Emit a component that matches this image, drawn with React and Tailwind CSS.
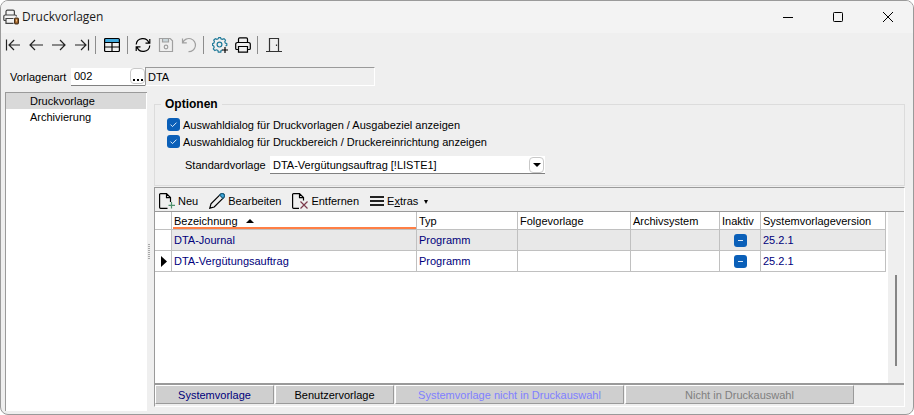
import { useEffect, useRef } from "react";

function Separator() {
  return <span className="h-[18px] w-px shrink-0 bg-[#8c8c8c]" />;
}

function ToolButton({ label, children, disabled, className = "" }) {
  return (
    <button
      type="button"
      aria-label={label}
      disabled={disabled}
      className={"flex h-5 w-[23px] shrink-0 items-center justify-center " + className}
    >
      {children}
    </button>
  );
}

function Icon({ size = "size-4", stroke = "stroke-[#222]", children }) {
  return (
    <svg viewBox="0 0 16 16" aria-hidden="true" className={"shrink-0 fill-none stroke-[1.2] " + size + " " + stroke}>
      {children}
    </svg>
  );
}

function CheckBox({ id, label, mixed }) {
  const ref = useRef(null);
  useEffect(() => {
    if (mixed) ref.current.indeterminate = true;
  }, [mixed]);
  return (
    <span className="inline-grid size-[13px] shrink-0">
      <input
        ref={ref}
        id={id}
        type="checkbox"
        aria-label={label}
        defaultChecked={!mixed}
        className="col-start-1 row-start-1 size-[13px] appearance-none rounded-[3px] bg-[#0a5fb8]"
      />
      <svg
        viewBox="0 0 13 13"
        aria-hidden="true"
        className="pointer-events-none col-start-1 row-start-1 size-[13px] fill-none stroke-[#dcebfa]"
      >
        <path d={mixed ? "M4 6.5h5" : "M3.5 6.6l2 2 4-4"} />
      </svg>
    </span>
  );
}

function TitleBar() {
  return (
    <header className="flex h-8 shrink-0 items-center bg-[#f3f3f3] pl-0.5">
      <svg viewBox="0 0 16 16" aria-hidden="true" className="size-4 fill-none stroke-[#444] stroke-[1.2]">
        <path d="M3 6V2.6A1.4 1.4 0 0 1 4.4 1.2H10A1.4 1.4 0 0 1 11.4 2.6V6" />
        <path d="M3 11.5H1.8A1 1 0 0 1 .8 10.5V7.5A1.5 1.5 0 0 1 2.3 6H12A1.5 1.5 0 0 1 13.5 7.5" />
        <path d="M10.5 14.4H3V9.5h7.5" />
        <rect x="11.6" y="9" width="3.8" height="5.8" rx="1" className="fill-[#a86a2c] stroke-[#4a3018]" />
        <path d="M13.5 10.5v2" className="stroke-[#f0c48c]" />
      </svg>
      <h1 className="grow pl-[3px] font-['Open_Sans',sans-serif] text-[12px] leading-4 text-[#1a1a1a]">Druckvorlagen</h1>
      <div className="flex">
        <button type="button" aria-label="Minimieren" className="flex h-8 w-[50px] items-center justify-center">
          <svg viewBox="0 0 10 10" className="size-2.5 fill-none stroke-black">
            <path d="M0 5.5h10" />
          </svg>
        </button>
        <button type="button" aria-label="Maximieren" className="flex h-8 w-[50px] items-center justify-center">
          <svg viewBox="0 0 10 10" className="size-2.5 fill-none stroke-black">
            <rect x=".5" y=".5" width="9" height="9" rx=".8" />
          </svg>
        </button>
        <button type="button" aria-label="Schließen" className="flex h-8 w-[50px] items-center justify-center">
          <svg viewBox="0 0 10 10" className="size-2.5 fill-none stroke-black">
            <path d="M0 0l10 10M10 0L0 10" />
          </svg>
        </button>
      </div>
    </header>
  );
}

function MainToolbar() {
  return (
    <div role="toolbar" aria-label="Hauptleiste" className="flex h-6 shrink-0 items-center">
      <ToolButton label="Erster">
        <Icon><path d="M1.5 2.5v11M15 8H4M9 3L4 8l5 5" /></Icon>
      </ToolButton>
      <ToolButton label="Zurück">
        <Icon><path d="M15 8H2M7 3L2 8l5 5" /></Icon>
      </ToolButton>
      <ToolButton label="Weiter">
        <Icon><path d="M1 8h13M9 3l5 5-5 5" /></Icon>
      </ToolButton>
      <ToolButton label="Letzter">
        <Icon><path d="M14.5 2.5v11M1 8h11M7 3l5 5-5 5" /></Icon>
      </ToolButton>
      <span className="w-0.5" />
      <Separator />
      <ToolButton label="Tabelle" className="mx-1">
        <Icon stroke="stroke-black">
          <path d="M1 2h14v3.5H1z" className="fill-[#3fa9dd] stroke-none" />
          <rect x=".6" y="1.5" width="14.8" height="13" rx="1" />
          <path d="M.6 5.5h14.8M.6 10h14.8M8 5.5v9" />
        </Icon>
      </ToolButton>
      <Separator />
      <ToolButton label="Aktualisieren" className="ml-[3px]">
        <Icon stroke="stroke-black">
          <path d="M1.2 7.5A6.6 6.6 0 0 1 14 6M14.8 8.5A6.6 6.6 0 0 1 2 10M14.8 2v4.2h-4.3M1.2 14V9.8h4.3" />
        </Icon>
      </ToolButton>
      <ToolButton label="Speichern" disabled>
        <Icon stroke="stroke-[#a0a0a0]">
          <path d="M4.5 1.5h6V5h-6z" className="fill-[#c9d6da]" />
          <path d="M1.5 1.5h10.7l2.3 2.3v10.7h-13z" />
          <circle cx="8" cy="10" r="1.8" />
        </Icon>
      </ToolButton>
      <ToolButton label="Rückgängig" disabled>
        <Icon stroke="stroke-[#a0a0a0]">
          <path d="M1.5 1.5v4.3h4.3M1.8 5.5A6.6 6.6 0 1 1 7.5 14.7" />
        </Icon>
      </ToolButton>
      <span className="w-[3px]" />
      <Separator />
      <ToolButton label="Einstellungen" className="ml-1">
        <Icon stroke="stroke-[#1f7a99]">
          <path
            d="M9.9 12.1L8.6 12.5 8.3 14.3H5.8L5.4 12.5 4 11.9 2.3 12.7.8 11 1.7 9.3 1.2 8 0 7.5V5.7L1.4 5.1 1.9 3.7 1.2 2.2 2.8.8 4.4 1.5 5.6 1 6.2-.2H8L8.6 1 9.9 1.5 11.5.8 13 2.3 12.3 3.9 12.8 5.2 14.3 5.8V7.5L13 8.1"
            transform="translate(.5 .9)"
          />
          <circle cx="7.5" cy="7.6" r="2.4" />
          <path d="M13 10v6M10 13h6" className="stroke-black" />
        </Icon>
      </ToolButton>
      <ToolButton label="Drucken">
        <Icon stroke="stroke-black">
          <path d="M3.5 5.5V2A1.2 1.2 0 0 1 4.7.8h6.600A1.2 1.2 0 0 1 12.5 2v3.5" />
          <path d="M3.5 12.5H1.7a1 1 0 0 1-1-1V7.2A1.7 1.7 0 0 1 2.4 5.5h11.2a1.7 1.7 0 0 1 1.7 1.7v4.3a1 1 0 0 1-1 1h-1.8" />
          <path d="M3.5 9.5h9v5.7h-9z" />
        </Icon>
      </ToolButton>
      <span className="w-[3px]" />
      <Separator />
      <ToolButton label="Beenden" className="ml-1">
        <Icon stroke="stroke-[#333]">
          <path d="M3.5 14.5v-13h9v13M0 14.5h16M10.5 7.5v1.5" />
        </Icon>
      </ToolButton>
    </div>
  );
}

function GridButton({ icon, children }) {
  return (
    <button type="button" className="flex items-center gap-[3px] whitespace-nowrap">
      {icon}
      <span>{children}</span>
    </button>
  );
}

function GridToolbar() {
  return (
    <div role="toolbar" aria-label="Vorlagen" className="flex h-[23px] shrink-0 items-center gap-[11px] pt-0.5 pl-1">
      <GridButton
        icon={
          <Icon stroke="stroke-black">
            <path d="M8.5 15.3H1.6a1 1 0 0 1-1-1V1.6a1 1 0 0 1 1-1H7.5L11.5 4.6V9M7.5.6v4h4" />
            <path d="M12.5 9v6.5M9.5 12.3h6.5" className="stroke-[#4d8f6c]" />
          </Icon>
        }
      >
        Neu
      </GridButton>
      <GridButton
        icon={
          <Icon stroke="stroke-black">
            <path d="M.8 15.2l1.2-4.4L11.4 1.4a2.24 2.24 0 0 1 3.2 3.2L5.2 14z" />
            <path d="M10.7 2.1l.9-.9a2.2 2.2 0 0 1 3.2 3.2l-.9.9z" className="fill-[#3fa9dd] stroke-[#1c5f80]" />
          </Icon>
        }
      >
        Bearbeiten
      </GridButton>
      <GridButton
        icon={
          <Icon stroke="stroke-black">
            <path d="M7 15.3H1.6a1 1 0 0 1-1-1V1.6a1 1 0 0 1 1-1H7.5L11.5 4.6V7.5M7.5.6v4h4" />
            <path d="M8.5 8.5l7 7M15.5 8.5l-7 7" className="stroke-[#7d3a4c]" />
          </Icon>
        }
      >
        Entfernen
      </GridButton>
      <GridButton
        icon={
          <svg viewBox="0 0 14 12" aria-hidden="true" className="h-3 w-3.5 stroke-[#222] stroke-2">
            <path d="M0 2h14M0 6h14M0 10h14" />
          </svg>
        }
      >
        E<span className="underline">x</span>tras
        <svg viewBox="0 0 4 4" aria-hidden="true" className="ml-1.5 inline size-1 fill-black">
          <path d="M0 0h4L2 4z" />
        </svg>
      </GridButton>
    </div>
  );
}

const rows = [
  { name: "DTA-Journal", type: "Programm", version: "25.2.1", shaded: true },
  { name: "DTA-Vergütungsauftrag", type: "Programm", version: "25.2.1", current: true },
];

const head = "border-r border-b border-[#c0c0c0] px-0.5 text-left font-normal";
const cell = "border-r border-b border-[#c0c0c0] px-0.5";

function TemplateTable() {
  return (
    <div className="flex min-h-0 grow border-t border-[#9a9a9a] bg-white">
      <div className="grow pr-0.5">
        <table className="w-full table-fixed border-separate border-spacing-0 whitespace-nowrap">
          <colgroup>
            <col className="w-[17px]" />
            <col />
            <col className="w-[101px]" />
            <col className="w-[113px]" />
            <col className="w-[89px]" />
            <col className="w-[41px]" />
            <col className="w-[125px]" />
          </colgroup>
          <thead>
            <tr className="h-[18px]">
              <th className={head} aria-label="Markierung" />
              <th className="border-r border-b border-[#c0c0c0] pl-px text-left font-normal">
                <div className="flex h-[17px] items-center gap-2 border-b-2 border-[#ff7f45] pt-0.5 pl-px">
                  Bezeichnung
                  <svg viewBox="0 0 8 4" aria-hidden="true" className="h-1 w-2 fill-black">
                    <path d="M4 0l4 4H0z" />
                  </svg>
                </div>
              </th>
              <th className={head}>Typ</th>
              <th className={head}>Folgevorlage</th>
              <th className={head}>Archivsystem</th>
              <th className={head}>Inaktiv</th>
              <th className={head}>Systemvorlageversion</th>
            </tr>
          </thead>
          <tbody className="text-[#00007b]">
            {rows.map((row) => (
              <tr key={row.name} className={row.shaded ? "h-[21px] bg-[#e8e8e8]" : "h-[21px]"}>
                <td className={cell + " bg-white"}>
                  {row.current && (
                    <svg viewBox="0 0 6 11" aria-label="Aktuell" className="ml-1 h-[11px] w-1.5 fill-black">
                      <path d="M0 0l6 5.5L0 11z" />
                    </svg>
                  )}
                </td>
                <td className={cell}>{row.name}</td>
                <td className={cell}>{row.type}</td>
                <td className={cell} />
                <td className={cell} />
                <td className={cell}>
                  <div className="flex justify-center">
                    <CheckBox mixed label={"Inaktiv: " + row.name} />
                  </div>
                </td>
                <td className={cell}>{row.version}</td>
              </tr>
            ))}
          </tbody>
        </table>
      </div>
      <div className="flex w-4 shrink-0 justify-center bg-[#efefef] pt-[63px] pb-[17px]">
        <span className="w-0.5 bg-[#858585]" />
      </div>
    </div>
  );
}

function LegendButton({ className, children }) {
  return (
    <button
      type="button"
      className={
        "mr-px h-[19px] border border-t-white border-r-[#9a9a9a] border-b-[#9a9a9a] border-l-white bg-[#cfcfcf] leading-4 " +
        className
      }
    >
      {children}
    </button>
  );
}

export default function App() {
  return (
    <div className="flex h-screen min-h-[360px] flex-col overflow-hidden rounded-lg border border-[#9a9a9a] bg-[#efefef] font-['Liberation_Sans',Arial,sans-serif] text-[11px] leading-4 text-black">
      <TitleBar />
      <MainToolbar />
      <div className="mt-2.5 flex h-[19px] shrink-0 items-center pl-[9px]">
        <label htmlFor="art" className="w-[61px]">Vorlagenart</label>
        <div className="flex h-[18px] w-[74px] items-center border-b border-[#808080] bg-white">
          <input id="art" defaultValue="002" className="w-0 grow bg-transparent pl-[3px] outline-none" />
          <button
            type="button"
            aria-label="Auswählen"
            className="flex h-4 w-[15px] items-end justify-center rounded border border-[#c8c8c8] bg-white pb-0.5"
          >
            <svg viewBox="0 0 10 2" aria-hidden="true" className="h-0.5 w-2.5 fill-black">
              <path d="M0 0h2v2H0zM4 0h2v2H4zM8 0h2v2H8z" />
            </svg>
          </button>
        </div>
        <input
          readOnly
          aria-label="Bezeichnung der Vorlagenart"
          value="DTA"
          className="h-[19px] w-[230px] border border-t-[#9a9a9a] border-r-white border-b-white border-l-[#9a9a9a] bg-transparent pl-0.5 outline-none"
        />
      </div>

      <div className="mt-1.5 mb-[3px] flex min-h-0 grow pr-2 pl-1">
        <nav className="w-[142px] shrink-0 border-t border-l border-[#9a9a9a] bg-white">
          <ul>
            <li>
              <a href="#druckvorlage" aria-current="page" className="mr-px block h-4 bg-[#d9d9d9] pl-6">Druckvorlage</a>
            </li>
            <li>
              <a href="#archivierung" className="mr-px block h-4 pl-6">Archivierung</a>
            </li>
          </ul>
        </nav>
        <div className="flex w-[7px] shrink-0 items-center pl-px">
          <span className="h-4 w-0.5 bg-[repeating-linear-gradient(#a8a8a8_0_1px,transparent_1px_2px)]" />
        </div>

        <main className="flex min-w-0 grow flex-col pt-1 pb-1">
          <fieldset className="h-[90px] shrink-0 border border-[#dcdcdc] px-3">
            <legend className="-ml-1.5 px-1 text-[12px] font-bold">Optionen</legend>
            <div className="mt-1 flex h-[17px] items-center gap-[3px]">
              <CheckBox id="dialog-ausgabe" />
              <label htmlFor="dialog-ausgabe">Auswahldialog für Druckvorlagen / Ausgabeziel anzeigen</label>
            </div>
            <div className="flex h-[17px] items-center gap-[3px]">
              <CheckBox id="dialog-bereich" />
              <label htmlFor="dialog-bereich">Auswahldialog für Druckbereich / Druckereinrichtung anzeigen</label>
            </div>
            <div className="mt-1.5 flex items-center pl-[18px]">
              <label htmlFor="standard" className="w-[85px]">Standardvorlage</label>
              <div className="grid h-[18px] w-[275px] items-center border-b border-[#808080] bg-white">
                <select id="standard" className="col-start-1 row-start-1 w-full appearance-none bg-transparent pl-[3px] outline-none">
                  <option>DTA-Vergütungsauftrag [!LISTE1]</option>
                </select>
                <span className="pointer-events-none col-start-1 row-start-1 mr-px flex h-4 w-[15px] items-center justify-center justify-self-end rounded border border-[#c8c8c8] bg-white">
                  <svg viewBox="0 0 8 4" aria-hidden="true" className="h-1 w-2 fill-black">
                    <path d="M0 0h8L4 4z" />
                  </svg>
                </span>
              </div>
            </div>
          </fieldset>

          <section className="mt-px flex min-h-0 grow flex-col border border-t-[#9a9a9a] border-r-white border-b-white border-l-[#9a9a9a]">
            <GridToolbar />
            <TemplateTable />
            <div className="flex shrink-0 border-t-2 border-[#9a9a9a] pb-0.5">
              <LegendButton className="w-[119px] text-[#00007b]">Systemvorlage</LegendButton>
              <LegendButton className="w-[119px]">Benutzervorlage</LegendButton>
              <LegendButton className="w-[229px] text-[#8080ff]">Systemvorlage nicht in Druckauswahl</LegendButton>
              <LegendButton className="w-[229px] text-[#808080]">Nicht in Druckauswahl</LegendButton>
            </div>
          </section>
        </main>
      </div>
    </div>
  );
}
